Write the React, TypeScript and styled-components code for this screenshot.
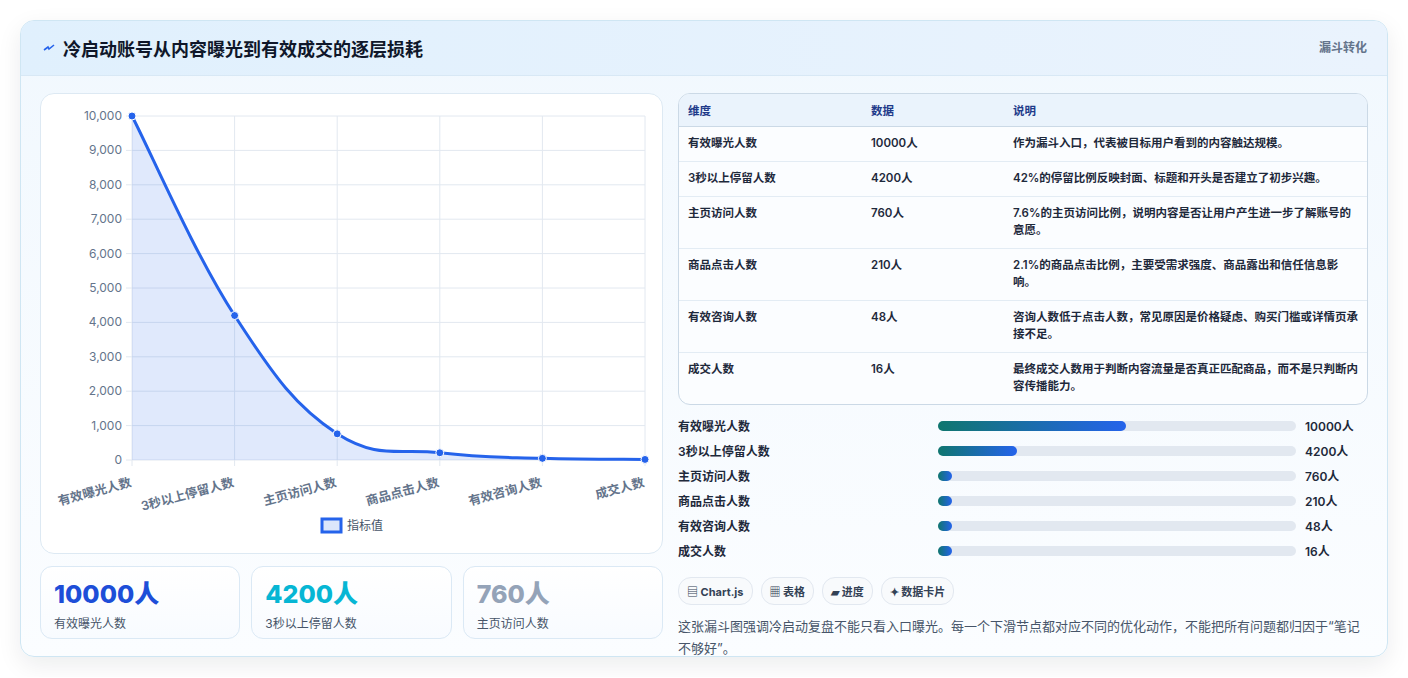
import styled, { createGlobalStyle } from 'styled-components';

const Global = createGlobalStyle`
  body {
    margin: 0;
    background: #ffffff;
    font-family: Inter, "Noto Sans CJK SC", sans-serif;
    color: #1e293b;
  }
`;

const Page = styled.div`
  padding: 20px 20px 20px 20px;
`;

const Card = styled.div`
  width: 1368px;
  height: 637px;
  box-sizing: border-box;
  border: 1px solid #cfe6f3;
  border-radius: 14px;
  background: linear-gradient(180deg, #f1f8fe 0%, #fbfdff 100%);
  box-shadow: 0 8px 24px rgba(15, 23, 42, 0.08);
  overflow: hidden;
`;

const Header = styled.div`
  height: 55px;
  display: flex;
  align-items: center;
  justify-content: space-between;
  padding: 0 20px 0 22px;
  background: linear-gradient(90deg, #e0f0fd 0%, #eaf3fd 100%);
  border-bottom: 1px solid #d8e8f5;
  box-sizing: border-box;
`;

const Title = styled.h1`
  margin: 0;
  font-size: 18px;
  font-weight: 700;
  color: #0f172a;
  display: flex;
  align-items: center;
  gap: 8px;
`;

const Tag = styled.span`
  font-size: 12px;
  font-weight: 700;
  color: #64748b;
  align-self: flex-start;
  margin-top: 17px;
`;

const Body = styled.div`
  display: grid;
  grid-template-columns: 623px 690px;
  gap: 15px;
  padding: 17px 19px 0 19px;
`;

const Col = styled.div`
  display: flex;
  flex-direction: column;
`;

const ChartCard = styled.div`
  height: 461px;
  box-sizing: border-box;
  border: 1px solid #dde9f3;
  border-radius: 14px;
  background: #ffffff;
`;

const Stats = styled.div`
  display: grid;
  grid-template-columns: repeat(3, 1fr);
  gap: 11px;
  margin-top: 12px;
`;

const Stat = styled.div`
  height: 73px;
  box-sizing: border-box;
  border: 1px solid #dbe9f5;
  border-radius: 12px;
  background: linear-gradient(180deg, #ffffff, #f8fbff);
  padding: 12px 13px;
`;

const StatValue = styled.div<{ $c: string }>`
  font-size: 25px;
  font-weight: 800;
  color: ${p => p.$c};
  line-height: 30px;
`;

const StatLabel = styled.div`
  font-size: 12px;
  color: #475569;
  margin-top: 5px;
`;

const Table = styled.table`
  width: 100%;
  table-layout: fixed;
  border-collapse: separate;
  border-spacing: 0;
  border: 1px solid #cbd9e6;
  border-radius: 12px;
  overflow: hidden;
  font-size: 11.5px;
  background: #fbfdff;
`;

const Th = styled.th<{ $w?: number }>`
  text-align: left;
  height: 32px;
  padding: 0 9px;
  background: #eaf3fc;
  color: #1e3a8a;
  font-weight: 700;
  border-bottom: 1px solid #cbd9e6;
  width: ${p => (p.$w ? `${p.$w}px` : 'auto')};
`;

const Td = styled.td`
  padding: 8px 9px 9px;
  line-height: 17px;
  color: #1e293b;
  font-weight: 600;
  border-bottom: 1px solid #e3ecf4;
  vertical-align: top;
  tr:last-child & { border-bottom: none; }
`;

const Bars = styled.div`
  display: flex;
  flex-direction: column;
  gap: 11px;
  margin-top: 12px;
`;

const BarRow = styled.div`
  display: grid;
  grid-template-columns: 251px 358px auto;
  align-items: center;
  gap: 9px;
  font-size: 12px;
  font-weight: 600;
  height: 14px;
`;

const BarLabel = styled.span`
  color: #1e293b;
`;

const Track = styled.div`
  height: 10px;
  border-radius: 5px;
  background: #e2e8f0;
`;

const Fill = styled.div`
  height: 100%;
  border-radius: 5px;
  background: linear-gradient(90deg, #0f766e, #2563eb);
`;

const Chips = styled.div`
  display: flex;
  gap: 8px;
  margin-top: 21px;
`;

const Chip = styled.span`
  height: 26px;
  padding: 0 8px;
  display: inline-flex;
  align-items: center;
  border: 1px solid #e2e8f0;
  border-radius: 13px;
  background: #f8fafc;
  font-size: 11px;
  font-weight: 700;
  color: #334155;
`;

const Note = styled.p`
  margin: 10px 0 0;
  font-size: 13px;
  line-height: 22px;
  color: #475569;
`;

const labels = ['有效曝光人数', '3秒以上停留人数', '主页访问人数', '商品点击人数', '有效咨询人数', '成交人数'];
const values = [10000, 4200, 760, 210, 48, 16];

const rows = [
  ['有效曝光人数', '10000人', '作为漏斗入口，代表被目标用户看到的内容触达规模。'],
  ['3秒以上停留人数', '4200人', '42%的停留比例反映封面、标题和开头是否建立了初步兴趣。'],
  ['主页访问人数', '760人', '7.6%的主页访问比例，说明内容是否让用户产生进一步了解账号的意愿。'],
  ['商品点击人数', '210人', '2.1%的商品点击比例，主要受需求强度、商品露出和信任信息影响。'],
  ['有效咨询人数', '48人', '咨询人数低于点击人数，常见原因是价格疑虑、购买门槛或详情页承接不足。'],
  ['成交人数', '16人', '最终成交人数用于判断内容流量是否真正匹配商品，而不是只判断内容传播能力。'],
];

function Chart() {
  const x0 = 91, x1 = 604, yTop = 22, yBot = 366;
  const pts = values.map((v, i) => [x0 + (i * (x1 - x0)) / 5, yBot - (v / 10000) * (yBot - yTop)]);
  let d = `M${pts[0][0]},${pts[0][1]}`;
  for (let i = 0; i < pts.length - 1; i++) {
    const p0 = pts[Math.max(0, i - 1)], p1 = pts[i], p2 = pts[i + 1], p3 = pts[Math.min(pts.length - 1, i + 2)];
    const t = 0.2;
    const c1 = [p1[0] + (p2[0] - p0[0]) * t, Math.min(yBot, p1[1] + (p2[1] - p0[1]) * t)];
    const c2 = [p2[0] - (p3[0] - p1[0]) * t, Math.min(yBot, p2[1] - (p3[1] - p1[1]) * t)];
    d += ` C${c1[0]},${c1[1]} ${c2[0]},${c2[1]} ${p2[0]},${p2[1]}`;
  }
  const area = `${d} L${x1},${yBot} L${x0},${yBot} Z`;
  return (
    <svg width="621" height="459" style={{ display: 'block' }} fontFamily="Inter, 'Noto Sans CJK SC', sans-serif">
      {Array.from({ length: 11 }).map((_, i) => {
        const y = yBot - (i * (yBot - yTop)) / 10;
        return (
          <g key={i}>
            <line x1={x0 - 6} x2={x1} y1={y} y2={y} stroke="#e2e8f0" />
            <text x={x0 - 10} y={y + 4} fontSize="12" fill="#64748b" textAnchor="end">
              {(i * 1000).toLocaleString('en-US')}
            </text>
          </g>
        );
      })}
      {pts.map((p, i) => (
        <g key={i}>
          <line x1={p[0]} x2={p[0]} y1={yTop} y2={yBot + 6} stroke="#e2e8f0" />
          <text x={p[0]} y={yBot + 26} fontSize="12.5" fontWeight="600" fill="#64748b" textAnchor="end" transform={`rotate(-15 ${p[0]} ${yBot + 26})`}>
            {labels[i]}
          </text>
        </g>
      ))}
      <path d={area} fill="rgba(37,99,235,0.14)" />
      <path d={d} fill="none" stroke="#2563eb" strokeWidth="3" />
      {pts.map((p, i) => (
        <circle key={i} cx={p[0]} cy={p[1]} r="4" fill="#2563eb" stroke="#ffffff" strokeWidth="1" />
      ))}
      <rect x="281" y="425" width="19" height="13" fill="#dbe6fb" stroke="#2563eb" strokeWidth="3" />
      <text x="306" y="436" fontSize="12" fill="#475569">指标值</text>
    </svg>
  );
}

export default function App() {
  return (
    <>
      <Global />
      <Page>
        <Card>
          <Header>
            <Title>
              <svg width="12" height="12" viewBox="0 0 12 12">
                <path d="M1 8 L5 5 L6 7 L11 3" stroke="#2563eb" strokeWidth="1.6" fill="none" />
              </svg>
              冷启动账号从内容曝光到有效成交的逐层损耗
            </Title>
            <Tag>漏斗转化</Tag>
          </Header>
          <Body>
            <Col>
              <ChartCard>
                <Chart />
              </ChartCard>
              <Stats>
                <Stat>
                  <StatValue $c="#1d4ed8">10000人</StatValue>
                  <StatLabel>有效曝光人数</StatLabel>
                </Stat>
                <Stat>
                  <StatValue $c="#06b6d4">4200人</StatValue>
                  <StatLabel>3秒以上停留人数</StatLabel>
                </Stat>
                <Stat>
                  <StatValue $c="#94a3b8">760人</StatValue>
                  <StatLabel>主页访问人数</StatLabel>
                </Stat>
              </Stats>
            </Col>
            <Col>
              <Table>
                <thead>
                  <tr>
                    <Th $w={165}>维度</Th>
                    <Th $w={124}>数据</Th>
                    <Th>说明</Th>
                  </tr>
                </thead>
                <tbody>
                  {rows.map(r => (
                    <tr key={r[0]}>
                      <Td>{r[0]}</Td>
                      <Td>{r[1]}</Td>
                      <Td>{r[2]}</Td>
                    </tr>
                  ))}
                </tbody>
              </Table>
              <Bars>
                {values.map((v, i) => (
                  <BarRow key={i}>
                    <BarLabel>{labels[i]}</BarLabel>
                    <Track>
                      <Fill style={{ width: `${Math.max(4, (v / 10000) * 52.5)}%` }} />
                    </Track>
                    <BarLabel>{v}人</BarLabel>
                  </BarRow>
                ))}
              </Bars>
              <Chips>
                <Chip>▤ Chart.js</Chip>
                <Chip>▦ 表格</Chip>
                <Chip>▰ 进度</Chip>
                <Chip>✦ 数据卡片</Chip>
              </Chips>
              <Note>这张漏斗图强调冷启动复盘不能只看入口曝光。每一个下滑节点都对应不同的优化动作，不能把所有问题都归因于“笔记不够好”。</Note>
            </Col>
          </Body>
        </Card>
      </Page>
    </>
  );
}
